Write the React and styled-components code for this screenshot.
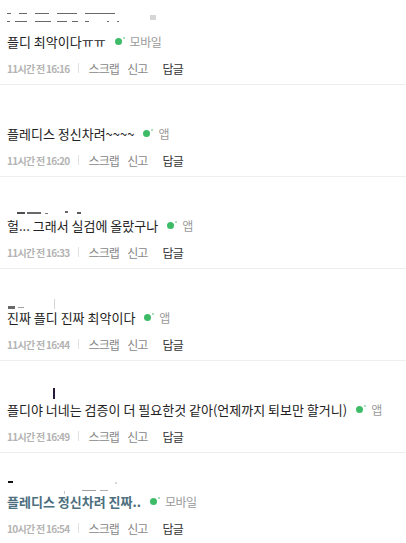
import React from "react";
import styled, { createGlobalStyle } from "styled-components";

const Global = createGlobalStyle`
  html, body { margin: 0; padding: 0; background: #fff; }
  body { font-family: "Noto Sans CJK KR", "Noto Sans", sans-serif; overflow: hidden; }
`;

const List = styled.ul`
  list-style: none;
  margin: -7px 0 0;
  padding: 0;
`;

const Item = styled.li`
  padding: 19px 0 5px 7px;
  border-bottom: 1px solid #eeeeee;
`;

const NameRow = styled.div`
  height: 18px;
  position: relative;
`;

const Blot = styled.span`
  position: absolute;
  left: ${(p) => p.$x}px;
  top: ${(p) => p.$y}px;
  width: ${(p) => p.$w}px;
  height: ${(p) => p.$h || 1}px;
  background: ${(p) => p.$c || "#444"};
  opacity: ${(p) => p.$o || 0.8};
`;

const Body = styled.div`
  display: flex;
  align-items: center;
  height: 22px;
  font-size: 13px;
  letter-spacing: 0;
  color: ${(p) => (p.$link ? "#4d6f7e" : "#222")};
  font-weight: ${(p) => (p.$link ? 700 : 400)};
  white-space: nowrap;
`;

const Device = styled.span`
  display: inline-flex;
  align-items: center;
  margin-left: 9px;
  font-size: 12px;
  letter-spacing: -0.5px;
  font-weight: 400;
  color: #9a9a9a;
`;

const Dot = styled.span`
  position: relative;
  width: 7px;
  height: 7px;
  border-radius: 50%;
  background: #3dbb67;
  margin-right: 8px;
  &::after {
    content: "";
    position: absolute;
    right: -3px;
    top: -1px;
    width: 2px;
    height: 2px;
    border-radius: 50%;
    background: #8fd4a5;
  }
`;

const Meta = styled.div`
  display: flex;
  align-items: center;
  height: 22px;
  margin-top: 5px;
`;

const Time = styled.span`
  font-size: 10px;
  letter-spacing: -0.7px;
  color: #b3b3b3;
  font-weight: 700;
  white-space: pre;
`;

const Sep = styled.span`
  width: 1px;
  height: 10px;
  background: #e2e2e2;
  margin: 0 9px 0 9px;
`;

const Action = styled.span`
  font-size: 12px;
  letter-spacing: -0.8px;
  color: ${(p) => (p.$strong ? "#333" : "#888")};
  margin-right: ${(p) => p.$mr || 0}px;
`;

const comments = [
  {
    text: "플디 최악이다ㅠㅠ",
    device: "모바일",
    time: "11시간 전 16:16",
    blots: [
      { x: 0, y: -5, w: 4 },
      { x: 12, y: -5, w: 8 },
      { x: 28, y: -5, w: 14 },
      { x: 50, y: -5, w: 20 },
      { x: 78, y: -5, w: 30 },
      { x: 0, y: 3, w: 3 },
      { x: 8, y: 3, w: 12 },
      { x: 28, y: 3, w: 16 },
      { x: 50, y: 3, w: 10 },
      { x: 65, y: 3, w: 6 },
      { x: 78, y: 3, w: 4 },
      { x: 100, y: 3, w: 2 },
      { x: 110, y: 3, w: 2 },
      { x: 143, y: -3, w: 6, h: 5, c: "#bbb", o: 0.6 },
    ],
  },
  { text: "플레디스 정신차려~~~~", device: "앱", time: "11시간 전 16:20", blots: [] },
  {
    text: "헐... 그래서 실검에 올랐구나",
    device: "앱",
    time: "11시간 전 16:33",
    blots: [
      { x: 10, y: 10, w: 8, h: 2, c: "#222" },
      { x: 20, y: 10, w: 14, h: 2, c: "#444" },
      { x: 38, y: 11, w: 3, c: "#555" },
      { x: 58, y: 9, w: 3, h: 2, c: "#444" },
      { x: 70, y: 10, w: 4, h: 2, c: "#333" },
    ],
  },
  {
    text: "진짜 플디 진짜 최악이다",
    device: "앱",
    time: "11시간 전 16:44",
    blots: [
      { x: 1, y: 12, w: 7, h: 3, c: "#444" },
      { x: 11, y: 13, w: 6, c: "#888" },
      { x: 47, y: 5, w: 1, h: 10, c: "#ccc" },
    ],
  },
  {
    text: "플디야 너네는 검증이 더 필요한것 같아(언제까지 퇴보만 할거니)",
    device: "앱",
    time: "11시간 전 16:49",
    blots: [{ x: 46, y: 2, w: 2, h: 11, c: "#2a1a3a", o: 1 }],
  },
  {
    text: "플레디스 정신차려 진짜..",
    device: "모바일",
    time: "10시간 전 16:54",
    link: true,
    blots: [
      { x: 1, y: 3, w: 5, h: 2, c: "#111", o: 1 },
      { x: 57, y: 13, w: 1, h: 3, c: "#bbb" },
      { x: 75, y: 12, w: 14, c: "#888" },
      { x: 93, y: 12, w: 8, c: "#999" },
      { x: 108, y: 4, w: 2, h: 2, c: "#ccc" },
    ],
  },
];

export default function App() {
  return (
    <>
      <Global />
      <List>
        {comments.map((c, i) => (
          <Item key={i}>
            <NameRow>
              {c.blots.map((b, j) => (
                <Blot key={j} $x={b.x} $y={b.y + 6} $w={b.w} $h={b.h} $c={b.c} $o={b.o} />
              ))}
            </NameRow>
            <Body $link={c.link}>
              {c.text}
              <Device>
                <Dot />
                {c.device}
              </Device>
            </Body>
            <Meta>
              <Time>{c.time}</Time>
              <Sep />
              <Action $mr={8}>스크랩</Action>
              <Action $mr={15}>신고</Action>
              <Action $strong>답글</Action>
            </Meta>
          </Item>
        ))}
      </List>
    </>
  );
}
